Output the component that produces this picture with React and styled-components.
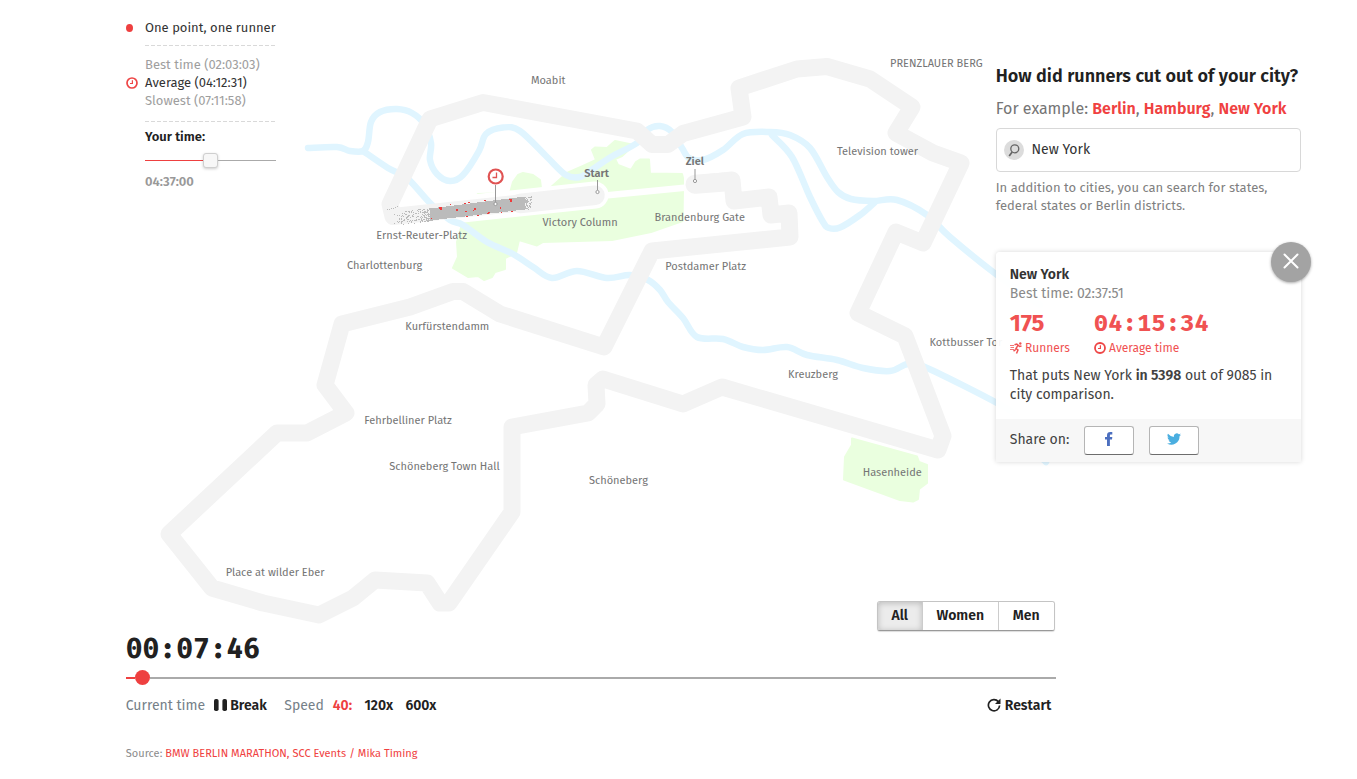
import React from 'react';
import styled, { createGlobalStyle } from 'styled-components';

const Global = createGlobalStyle`
  * { box-sizing: border-box; }
  body {
    margin: 0;
    background: #fff;
    color: #212121;
    font-family: "Fira Sans", "Noto Sans", sans-serif;
    overflow: hidden;
  }
`;

const Page = styled.main`
  width: 1357px;
  height: 779px;
  padding-left: 125.75px;
  display: grid;
  grid-template-columns: 870px 60px 245px;
  grid-template-rows: 631px 1fr;
`;

const Stage = styled.section`
  grid-column: 1 / 3;
  grid-row: 1;
  display: grid;
`;

const MapSvg = styled.svg`
  grid-area: 1 / 1;
  width: 930px;
  height: 631px;
  overflow: visible;
`;

const Legend = styled.aside`
  grid-area: 1 / 1;
  width: 150px;
  padding-top: 19px;
  font-size: 13px;
  line-height: 18px;
  white-space: nowrap;
`;

const LegendRow = styled.div`
  display: flex;
  align-items: center;
  height: 18px;
  color: ${(p) => (p.$muted ? '#9e9e9e' : '#333')};
`;

const LegendIcon = styled.div`
  width: 19.25px;
  flex: none;
  display: flex;
  align-items: center;
  svg { margin-bottom: 1px; }
`;

const Dot = styled.i`
  width: 7px;
  height: 8px;
  border-radius: 50%;
  background: #ee4040;
`;

const Dashes = styled.div`
  height: 1px;
  margin: ${(p) => p.$m};
  background: repeating-linear-gradient(90deg, #d9d9d9 0 4px, transparent 4px 6px);
`;

const YourTime = styled.div`
  margin-left: 19.25px;
  font-weight: 600;
  color: ${(p) => p.$c || '#212121'};
`;

const MiniSlider = styled.div`
  display: flex;
  align-items: center;
  margin: 5px 0 4px 19px;
  width: 131px;
  height: 18px;
`;

const MiniTrack = styled.div`
  height: 1px;
  width: ${(p) => p.$w}px;
  background: ${(p) => p.$c};
`;

const MiniThumb = styled.div`
  width: 15px;
  height: 15px;
  border: 1px solid #cfcfcf;
  border-radius: 3px;
  background: #f7f7f7;
  box-shadow: 0 1px 3px rgba(0, 0, 0, 0.2);
`;

const GenderWrap = styled.div`
  grid-area: 1 / 1;
  align-self: end;
  justify-self: end;
  display: flex;
  height: 30px;
  margin-right: 1px;
  border: 1px solid #c4c4c4;
  border-bottom-color: #999;
  border-radius: 3px;
  box-shadow: 0 1px 1px rgba(0, 0, 0, 0.14);
  background: #fff;
  overflow: hidden;
`;

const GenderButton = styled.button`
  width: ${(p) => p.$w}px;
  padding: 0 0 1px;
  border: 0;
  border-left: ${(p) => (p.$on ? '0' : '1px solid #ccc')};
  background: ${(p) => (p.$on ? '#ececec' : '#fff')};
  box-shadow: ${(p) => (p.$on ? 'inset 0 1px 6px rgba(0,0,0,.22)' : 'none')};
  font: 600 14px/27px "Fira Sans", "Noto Sans", sans-serif;
  color: #212121;
`;

const Sidebar = styled.section`
  grid-column: 2 / 4;
  grid-row: 1;
  width: 306px;
  padding-top: 63px;
  z-index: 1;
`;

const Heading = styled.h1`
  margin: 0;
  font-size: 18px;
  line-height: 26px;
  font-weight: 600;
  letter-spacing: 0.01px;
  white-space: nowrap;
`;

const Example = styled.p`
  margin: 7px 0 7px;
  font-size: 16px;
  line-height: 25px;
  color: #757575;
  white-space: nowrap;
`;

const Link = styled.a`
  color: #f04141;
  font-weight: ${(p) => p.$w || 600};
`;

const SearchBox = styled.div`
  width: 305px;
  height: 44px;
  border: 1px solid #d8d8d8;
  border-radius: 4px;
  background: #fff;
  padding: 0 7.5px;
  display: flex;
  align-items: center;
  font-size: 14px;
  line-height: 20px;
  color: #333;
`;

const SearchIcon = styled.svg`
  width: 20px;
  height: 20px;
  margin-right: 7.25px;
`;

const Hint = styled.p`
  margin: 7px 0 0;
  font-size: 13px;
  line-height: 18px;
  color: #808080;
  white-space: nowrap;
`;

const Card = styled.article`
  position: relative;
  margin-top: 37px;
  width: 305.5px;
  height: 210px;
  border-radius: 4px 4px 1px 1px;
  background: rgba(255, 255, 255, 0.94);
  box-shadow: 0 0 5px rgba(0, 0, 0, 0.16);
  display: flex;
  flex-direction: column;
`;

const Close = styled.button`
  position: absolute;
  top: -10px;
  right: -10px;
  width: 40px;
  height: 40px;
  padding: 0;
  border: 0;
  border-radius: 50%;
  background: #a3a3a3;
  box-shadow: 0 1px 3px rgba(0, 0, 0, 0.35);
`;

const CardBody = styled.div`
  flex: 1;
  padding: 13px 14px 0;
  font-size: 14px;
  line-height: 19px;
  color: #424242;
`;

const CardTitle = styled.div`
  font-weight: 600;
  color: #333;
`;

const CardSub = styled.div`
  color: #8a8a8a;
`;

const Stats = styled.div`
  display: flex;
  margin-top: 5px;
  color: #f05252;
`;

const Stat = styled.div`
  width: ${(p) => p.$w}px;
`;

const StatNumber = styled.div`
  font: ${(p) => (p.$mono ? '700 24px/30px "Fira Mono", "Liberation Mono", monospace' : '700 24px/30px "Fira Sans", "Noto Sans", sans-serif')};
  letter-spacing: ${(p) => (p.$mono ? 0 : -0.2)}px;
  height: 31px;
`;

const StatLabel = styled.div`
  display: flex;
  align-items: center;
  font-size: 12px;
  height: 19px;
  svg { margin: 0 3.25px 1px 0; }
`;

const Ranking = styled.p`
  margin: 8px 0 0;
  white-space: nowrap;
  b { font-weight: 600; }
`;

const Share = styled.footer`
  height: 43px;
  padding: 0 14px;
  background: rgba(247, 247, 247, 0.96);
  display: flex;
  align-items: center;
  font-size: 14px;
  line-height: 20px;
  color: #424242;
`;

const ShareLabel = styled.span`
  width: 74.5px;
  padding-bottom: 2px;
`;

const ShareButton = styled.button`
  width: 50px;
  height: 29px;
  margin-right: 15px;
  padding: 0 0 3px;
  border: 1px solid #b5b5b5;
  border-bottom-color: #6d6d6d;
  border-radius: 3px;
  background: #fff;
  display: flex;
  align-items: center;
  justify-content: center;
`;

const Controls = styled.section`
  grid-column: 1 / 3;
  grid-row: 2;
`;

const Clock = styled.div`
  font: 700 28px/36px "Fira Mono", "Liberation Mono", monospace;
  height: 39px;
  color: #212121;
`;

const Timeline = styled.div`
  display: flex;
  align-items: center;
  height: 15px;
`;

const Track = styled.div`
  width: ${(p) => p.$w}px;
  height: 2px;
  background: ${(p) => p.$c};
`;

const Knob = styled.div`
  width: 15px;
  height: 15px;
  border-radius: 50%;
  background: #ee4040;
`;

const Bar = styled.div`
  display: flex;
  align-items: center;
  height: 24px;
  margin-top: 8px;
  font-size: 14px;
  color: #757f88;
`;

const BarItem = styled.span`
  display: flex;
  align-items: center;
  width: ${(p) => (p.$w ? p.$w + 'px' : 'auto')};
  margin-left: ${(p) => (p.$push ? 'auto' : 0)};
  font-weight: ${(p) => (p.$b ? 600 : 400)};
  color: ${(p) => p.$c || 'inherit'};
  svg { margin-right: ${(p) => p.$gap || 0}px; }
`;

const Source = styled.p`
  margin: 28px 0 0;
  font-size: 11px;
  line-height: 18px;
  letter-spacing: 0.02px;
  color: #8c8c8c;
`;

const ClockIcon = ({ size, sw = 2 }) => (
  <svg width={size} height={size} viewBox="0 0 12 12" fill="none" stroke="#ee4646" strokeWidth={sw}>
    <circle cx="6" cy="6" r="5" />
    <path d="M6.4 3.2V6.5H4" strokeWidth="1.2" />
  </svg>
);

const ROUTE = '595,195 393,216.5 390,204 430,119 483,102.5 637,131 652,144.5 668,144.5 683,133.5 743,117 739,88 797,69 827,66.5 870,79 912,107 896,133 933,153 961,163 923,243 896,232 858,313 905,336 943,436 938,450 722,387 683,404 603,379 596,385 597,404 588,413 512,427 512,512 449,603 440,603 427,583 375,580 353,598 319,615 263,603 212,588 169,534 277,433 307,433 346,413 325,385 342,324 410,307 453,291.5 463,291.5 500,314 604,347 652,251 790,237 789,213 771,215 769,197 734,201 732,180 695,184';

const RIVERS = [
  [[308,148],[337,147],[350,151],[363,151],[368,142],[371,122],[380,112],[397,109],[412,113],[424,124],[431,143],[430,160],[437,174],[450,181],[463,175],[479,151],[486,134],[503,127.5],[520,131],[547,157],[566,175],[580,177],[593,169],[611,157],[637,143],[647,130],[660,126],[672,132],[682,148],[689,158],[703,160],[723,150],[743,134],[770,132],[790,135],[810,148],[827,177],[838,192],[851,199],[873,201],[897,200],[927,215],[950,237],[997,275],[1040,305]],
  [[772,135],[792,157],[810,197],[823,222],[829,228],[840,227.5],[860,215],[875,202]],
  [[363,151],[388,168],[407,178],[430,203],[450,220],[463,225],[487,242],[513,254],[533,267],[552,278],[577,271],[607,278],[630,275],[648,280],[660,290],[668,302],[683,318],[697,337],[723,339],[743,347],[763,350],[787,347],[807,355],[837,360],[863,368],[890,371],[908,364],[927,368],[997,403],[1016,417],[1022,440],[1046,462]],
];

// Catmull-Rom spline through the given points.
const smooth = (p) => {
  let d = `M${p[0]}`;
  for (let i = 0; i < p.length - 1; i++) {
    const a = p[i - 1] || p[i], b = p[i], c = p[i + 1], e = p[i + 2] || c;
    d += `C${b[0] + (c[0] - a[0]) / 6},${b[1] + (c[1] - a[1]) / 6} ${c[0] - (e[0] - b[0]) / 6},${c[1] - (e[1] - b[1]) / 6} ${c}`;
  }
  return d;
};

const PARK = '478,194 510,193 513,182 518,175 523,173 533,175 540,180 541,188 549,189 567,173 583,166 596,160 592,150 595,147.5 607,148 615,141 634,145 622,156 615,159 618,165 631,170 636,162 640,159.5 649,159.5 650,173.5 682,174 683,178 683,188 682.500,221 651,232 612,240 543,242 537,245.5 519,240 516,253 505,258 505,269 495,272 492,277 484,280 478,276 468,277 453,268 458,257 457,242 461,228 460,210';
const HASENHEIDE = '852,438.5 917,456.5 919,462 927,465 927,483 919,489 918,499 913,501.5 900,500 844,479.5 845,457 852,445';

const LABELS = [
  ['Moabit', 531, 84],
  ['PRENZLAUER BERG', 890, 67],
  ['Television tower', 837, 155],
  ['Brandenburg Gate', 654.5, 221],
  ['Victory Column', 542.5, 226],
  ['Ernst-Reuter-Platz', 376.3, 239],
  ['Charlottenburg', 347, 269],
  ['Postdamer Platz', 665.3, 270],
  ['Kurfürstendamm', 405.3, 330],
  ['Kottbusser Tor', 929.5, 346],
  ['Kreuzberg', 788, 378],
  ['Fehrbelliner Platz', 364.3, 424],
  ['Schöneberg Town Hall', 389.3, 470],
  ['Schöneberg', 589, 484],
  ['Hasenheide', 862.7, 476],
  ['Place at wilder Eber', 225.7, 576],
];

let seed = 11;
const rnd = () => {
  seed = (seed * 16807) % 2147483647;
  return seed / 2147483647;
};
const mid = (x) => 214.5 - (x - 432) * 0.125;
const SPECKS = [];
for (let i = 0; i < 200; i++) {
  const x = 432 - Math.pow(rnd(), 2.1) * 34;
  SPECKS.push([Math.round(x), Math.round(mid(x) - 0.5 + (rnd() - 0.5) * 13)]);
}
for (let i = 0; i < 60; i++) {
  const x = 524 + Math.pow(rnd(), 1.4) * 7;
  SPECKS.push([Math.round(x), Math.round(mid(x) + (rnd() - 0.5) * 13)]);
}
[[387,209],[389,209],[391,208],[393,208],[395,207],[397,206],[394,214],[397,215],[394,223],[397,221]].forEach((s) => SPECKS.push(s));

const RED = [[439,207,3,2],[440,209,2,1],[456,209,2,2],[465,211,2,1],[474,208,2,2],[450,204,1,1],[464,203,2,1],[468,202,2,1],[484,200,2,1],[509,199,3,1],[510,200,2,2],[488,212,2,1],[487,213,2,1],[501,212,1,1],[511,211,2,1],[466,216,2,1],[477,215,2,1],[473,210,1,1],[431,218,1,1],[500,207,1,2]];

const CityMap = () => (
  <MapSvg viewBox="126 0 930 631">
    <g fill="#eaffdf" stroke="#eaffdf" strokeWidth="2" strokeLinejoin="round">
      <polygon points={PARK} />
      <polygon points={HASENHEIDE} />
    </g>
    <path d="M393 216.500L595 195" stroke="#fff" strokeWidth="27" strokeLinecap="round" />
    <path d="M595 196.500L692 187" stroke="#fff" strokeWidth="6.500" />
    <path d="M695 184L720 182" stroke="#fff" strokeWidth="22" strokeLinecap="round" />
    <g fill="none" stroke="#e0f5ff" strokeWidth="6.5" strokeLinecap="round" strokeLinejoin="round">
      {RIVERS.map((r, i) => <path key={i} d={smooth(r)} />)}
    </g>
    <g fill="none" stroke="#f3f3f3" strokeLinecap="round" strokeLinejoin="round">
      <polyline points={ROUTE} strokeWidth="17" />
      <path d="M595 195.300L520 203.500" strokeWidth="19.500" />
      <path d="M695 184.300L725 182" strokeWidth="19" />
    </g>
    <g shapeRendering="crispEdges">
      <polygon points="430,208.500 525,196.500 525,209.500 430,220.500" fill="#bbb" />
      {SPECKS.map(([x, y], i) => <rect key={i} x={x} y={y} width="1" height="1" fill="#bbb" />)}
      {RED.map(([x, y, w, h], i) => <rect key={i} x={x} y={y} width={w} height={h} fill="#ee3b3b" />)}
    </g>
    <g fill="#fff" stroke="#999" strokeWidth="1">
      <path d="M495.500 185V202M597.500 180V190M695 169V179" />
      <circle cx="495.500" cy="204" r="1.600" />
      <circle cx="597.500" cy="192" r="1.600" />
      <circle cx="695" cy="181" r="1.600" />
    </g>
    <circle cx="495.700" cy="176.500" r="7" fill="#fff" stroke="#e05353" strokeWidth="2.200" />
    <path d="M496.500 172.500V177.500H492.500" fill="none" stroke="#e05353" strokeWidth="1.300" />
    <g fill="#757575" fontSize="11">
      {LABELS.map(([t, x, y]) => <text key={t} x={x} y={y}>{t}</text>)}
      <text x="584.200" y="177" fontWeight="600">Start</text>
      <text x="685.700" y="165" fontWeight="600">Ziel</text>
    </g>
  </MapSvg>
);

export default function App() {
  return (
    <>
      <Global />
      <Page>
        <Stage>
          <CityMap />
          <Legend>
            <LegendRow><LegendIcon><Dot /></LegendIcon>One point, one runner</LegendRow>
            <Dashes $m="8px 0 10px 19px" />
            <LegendRow $muted><LegendIcon />Best time (02:03:03)</LegendRow>
            <LegendRow><LegendIcon><ClockIcon size={12} sw={1.7} /></LegendIcon>Average (04:12:31)</LegendRow>
            <LegendRow $muted><LegendIcon />Slowest (07:11:58)</LegendRow>
            <Dashes $m="11px 0 6px 19px" />
            <YourTime>Your time:</YourTime>
            <MiniSlider>
              <MiniTrack $w={58} $c="#ee4040" />
              <MiniThumb />
              <MiniTrack $w={58} $c="#aaa" />
            </MiniSlider>
            <YourTime $c="#999">04:37:00</YourTime>
          </Legend>
          <GenderWrap>
            <GenderButton $on $w={44}>All</GenderButton>
            <GenderButton $w={76}>Women</GenderButton>
            <GenderButton $w={56}>Men</GenderButton>
          </GenderWrap>
        </Stage>
        <Sidebar>
          <Heading>How did runners cut out of your city?</Heading>
          <Example>
            For example: <Link>Berlin</Link>, <Link>Hamburg</Link>, <Link>New York</Link>
          </Example>
          <SearchBox>
            <SearchIcon viewBox="0 0 20 20" fill="none" stroke="#666" strokeWidth="1.3">
              <circle cx="10" cy="10" r="10" fill="#dcdcdc" stroke="none" />
              <circle cx="10.800" cy="8.800" r="4" />
              <path d="M8.200 12L5.200 16" strokeWidth="1.700" />
            </SearchIcon>
            New York
          </SearchBox>
          <Hint>
            In addition to cities, you can search for states,<br />
            federal states or Berlin districts.
          </Hint>
          <Card>
            <Close aria-label="Close">
              <svg width="40" height="40" viewBox="0 0 40 40" stroke="#fff" strokeWidth="2" strokeLinecap="round">
                <path d="M13.500 12.500L26.500 25.500M26.500 12.500L13.500 25.500" />
              </svg>
            </Close>
            <CardBody>
              <CardTitle>New York</CardTitle>
              <CardSub>Best time: 02:37:51</CardSub>
              <Stats>
                <Stat $w={84}>
                  <StatNumber>175</StatNumber>
                  <StatLabel>
                    <svg width="12" height="12" viewBox="0 0 12 12" fill="none" stroke="#f05252" strokeWidth="1.500">
                      <path d="M0 3.500H4M.5 5.500H4M0 7.500H4" strokeWidth=".8" />
                      <path d="M4.500 2.800L6.800 2L8.500 3.500L9.500 4.500L11.500 4M8 3.200L6 6.500L8 8L6.500 11.500M5.800 7.500L3.500 9.200" />
                      <circle cx="10.300" cy="1.500" r="1.200" fill="#f05252" stroke="none" />
                    </svg>
                    Runners
                  </StatLabel>
                </Stat>
                <Stat $w={150}>
                  <StatNumber $mono>04:15:34</StatNumber>
                  <StatLabel><ClockIcon size={12} sw={1.8} />Average time</StatLabel>
                </Stat>
              </Stats>
              <Ranking>
                That puts New York <b>in 5398</b> out of 9085 in<br />
                city comparison.
              </Ranking>
            </CardBody>
            <Share>
              <ShareLabel>Share on:</ShareLabel>
              <ShareButton aria-label="Facebook">
                <svg width="8" height="14" viewBox="0 0 8 14" fill="#4c6fbf">
                  <path d="M2 14V7.500H0V5H2V3.200C2 1 3.300 0 5.200 0H7.300V2.400H6C5.100 2.400 4.900 2.800 4.900 3.500V5H7.300L7 7.500H4.900V14Z" />
                </svg>
              </ShareButton>
              <ShareButton aria-label="Twitter">
                <svg width="14" height="14" viewBox="0 0 24 24" fill="#4aaee0">
                  <path d="M24 4.600a10 10 0 0 1-2.800.8 5 5 0 0 0 2.200-2.700 10 10 0 0 1-3.100 1.200 4.900 4.900 0 0 0-8.400 4.500A14 14 0 0 1 1.700 3.100a4.900 4.900 0 0 0 1.500 6.600 5 5 0 0 1-2.200-.6 4.900 4.900 0 0 0 3.900 4.900 5 5 0 0 1-2.200.1 4.900 4.900 0 0 0 4.600 3.400A9.900 9.900 0 0 1 0 19.500a14 14 0 0 0 21.500-12.400A10 10 0 0 0 24 4.600z" />
                </svg>
              </ShareButton>
            </Share>
          </Card>
        </Sidebar>
        <Controls>
          <Clock>00:07:46</Clock>
          <Timeline>
            <Track $w={9} $c="#ee4040" />
            <Knob />
            <Track $w={906} $c="#aaa" />
          </Timeline>
          <Bar>
            <BarItem $w={88.5}>Current time</BarItem>
            <BarItem $b $c="#212121" $w={70} $gap={3}>
              <svg width="13" height="12" viewBox="0 0 13 12" fill="#212121">
                <rect x="0" y="0" width="4.600" height="12" rx="1.800" />
                <rect x="8.400" y="0" width="4.600" height="12" rx="1.800" />
              </svg>
              Break
            </BarItem>
            <BarItem $w={48.5}>Speed</BarItem>
            <BarItem $b $c="#ee4040" $w={31.7}>40:</BarItem>
            <BarItem $b $c="#212121" $w={41}>120x</BarItem>
            <BarItem $b $c="#212121">600x</BarItem>
            <BarItem $b $c="#212121" $push $w={69} $gap={4}>
              <svg width="14" height="14" viewBox="0 0 14 14" fill="none" stroke="#212121" strokeWidth="1.700">
                <path d="M11.300 3.600A5.600 5.600 0 1 0 12.600 7.500" />
                <path d="M13.500 .5V6H8Z" fill="#212121" stroke="none" />
              </svg>
              Restart
            </BarItem>
          </Bar>
          <Source>
            Source: <Link $w={400}>BMW BERLIN MARATHON, SCC Events / Mika Timing</Link>
          </Source>
        </Controls>
      </Page>
    </>
  );
}
